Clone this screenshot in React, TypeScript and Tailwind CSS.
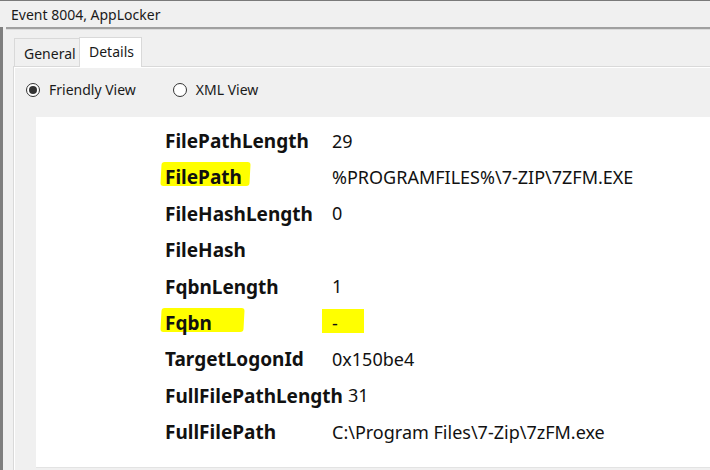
import React from "react";

const rows: { key: string; value: string; hlKey?: number; hlValue?: boolean }[] = [
  { key: "FilePathLength", value: "29" },
  { key: "FilePath", value: "%PROGRAMFILES%\\7-ZIP\\7ZFM.EXE", hlKey: 89 },
  { key: "FileHashLength", value: "0" },
  { key: "FileHash", value: "" },
  { key: "FqbnLength", value: "1" },
  { key: "Fqbn", value: "-", hlKey: 83, hlValue: true },
  { key: "TargetLogonId", value: "0x150be4" },
  { key: "FullFilePathLength", value: "31" },
  { key: "FullFilePath", value: "C:\\Program Files\\7-Zip\\7zFM.exe" },
];

function Radio({ checked, label }: { checked: boolean; label: string }) {
  return (
    <div className="flex items-center gap-[9px]">
      <span className="w-[14px] h-[14px] rounded-full border border-[#333] bg-white flex items-center justify-center">
        {checked && <span className="w-[8px] h-[8px] rounded-full bg-[#333]" />}
      </span>
      <span className="text-[14px] text-[#1a1a1a]">{label}</span>
    </div>
  );
}

export default function App() {
  return (
    <div
      className="w-[710px] h-[470px] bg-[#f0f0f0] border-t border-[#7a7a7a] overflow-hidden flex flex-col"
      style={{ fontFamily: '"Noto Sans", "Open Sans", sans-serif' }}
    >
      {/* title */}
      <div className="h-[26px] flex items-center pl-[11px] text-[14px] text-[#1a1a1a]">
        Event 8004, AppLocker
      </div>
      <div className="flex flex-1">
        <div className="w-[3px] bg-[#7f7f7f]" />
        <div className="flex-1 flex flex-col">
          <div className="ml-[3px] h-[2px] bg-[#a0a0a0]" />
          <div className="h-[1px] ml-[3px] bg-[#dcdcdc]" />
          {/* tabs */}
          <div className="flex items-end pl-[11px] h-[35px] mt-[1px]">
            <div className="w-[65px] h-[28px] border-t border-l border-[#d9d9d9] flex items-center pl-[9px] pt-[2px] text-[14px] text-[#1a1a1a]">
              General
            </div>
            <div className="w-[63px] h-[30px] -mb-[1px] border-t border-l border-r border-[#d9d9d9] bg-white flex items-center pl-[9px] pb-[2px] text-[14px] text-[#1a1a1a] relative z-10">
              Details
            </div>
          </div>
          <div className="flex-1 ml-[10px] border-t border-l border-[#d9d9d9] flex flex-col">
            <div className="flex-1 border-t border-l border-white flex flex-col">
              <div className="h-[49px] flex items-center gap-[37px] pl-[11px] pb-[6px]">
                <Radio checked label="Friendly View" />
                <Radio checked={false} label="XML View" />
              </div>
              <div className="flex-1 ml-[21px] mb-[2px] bg-white border-b border-[#e3e3e3] pt-[6px] pl-[129px]">
                {rows.map((r) => (
                  <div key={r.key} className="h-[36.4px] flex items-center text-[18px] text-[#111]">
                    <span className="min-w-[162px] mr-[5px] font-bold text-[19px] relative">
                      {r.hlKey && (
                        <span
                          className="absolute left-[-4px] top-[-1px] h-[24px] bg-[#ffff00] rounded-[3px] -skew-x-3"
                          style={{ width: r.hlKey }}
                        />
                      )}
                      <span className="relative">{r.key}</span>
                    </span>
                    <span className="relative">
                      {r.hlValue && (
                        <span className="absolute left-[-10px] w-[42px] top-[-1px] h-[24px] bg-[#ffff00]" />
                      )}
                      <span className="relative">{r.value}</span>
                    </span>
                  </div>
                ))}
              </div>
            </div>
          </div>
        </div>
      </div>
    </div>
  );
}
